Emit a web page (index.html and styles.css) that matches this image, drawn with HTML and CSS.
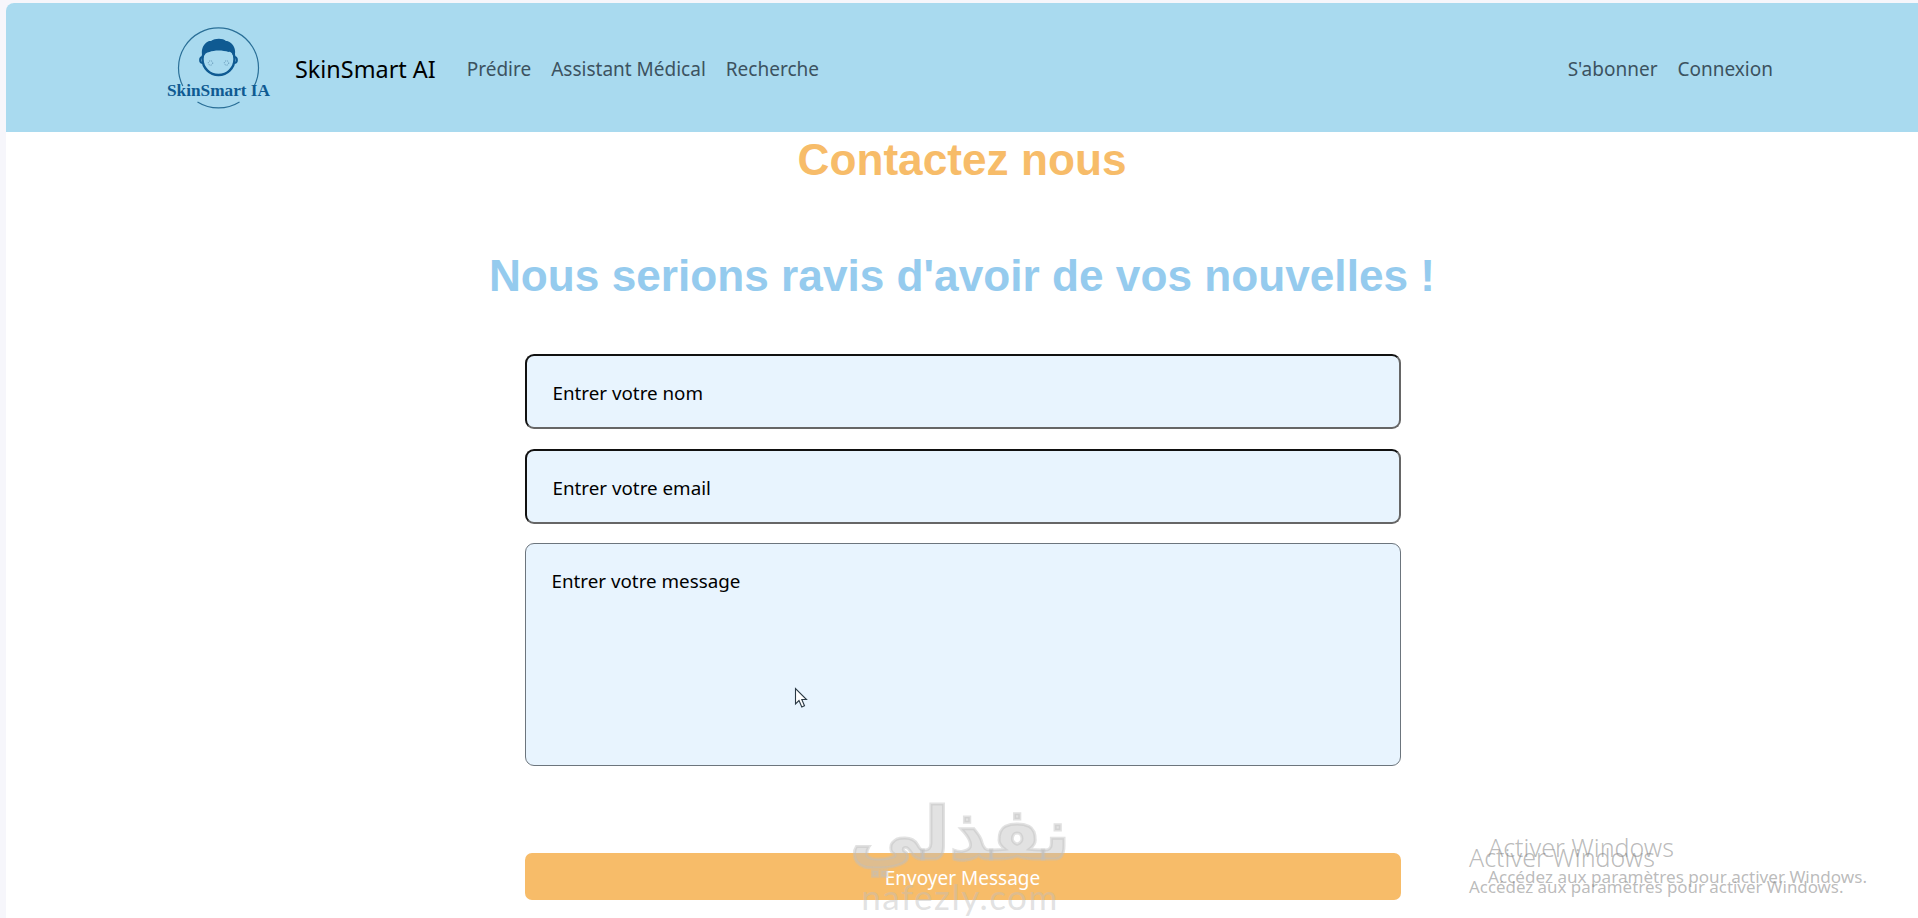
FILE: index.html
```html
<!DOCTYPE html>
<html lang="fr">
<head>
  <meta charset="UTF-8">
  <title>SkinSmart AI - Contact</title>
  <link rel="stylesheet" href="styles.css">
</head>
<body>
  <div class="window">
    <nav class="navbar">
      <a class="logo" href="#">
        <svg width="106" height="84" viewBox="0 0 106 84">
          <path d="M15.800 60A40 40 0 1 1 87.200 60" fill="none" stroke="#2a6f97" stroke-width="1.200"/>
          <path d="M30.500 76A40 40 0 0 0 72.500 76" fill="none" stroke="#2a6f97" stroke-width="1.200"/>
          <circle cx="36" cy="34" r="3" fill="#a9daef" stroke="#0f5a92" stroke-width="1.800"/>
          <circle cx="67" cy="34" r="3" fill="#a9daef" stroke="#0f5a92" stroke-width="1.800"/>
          <circle cx="51.500" cy="33" r="16" fill="#a9daef" stroke="#0f5a92" stroke-width="2.400"/>
          <path d="M36 32C32 21 40 14 44 15C48 12 56 12 59 15C64 15 71 22 67 32C65.500 27 63.500 25 61.500 26C56 24 47 24 42.500 26C39.500 26 37.500 28 36 32Z" fill="#0f5a92"/>
          <circle cx="43.500" cy="37" r="2.200" fill="none" stroke="#5f93b3" stroke-width="1" stroke-dasharray="1 1"/>
          <circle cx="59.500" cy="37" r="2.200" fill="none" stroke="#5f93b3" stroke-width="1" stroke-dasharray="1 1"/>
          <text class="logo-text" x="0" y="70" textLength="103" lengthAdjust="spacingAndGlyphs">SkinSmart IA</text>
        </svg>
      </a>
      <a class="brand" href="#">SkinSmart AI</a>
      <ul class="nav-links">
        <li><a href="#">Prédire</a></li>
        <li><a href="#">Assistant Médical</a></li>
        <li><a href="#">Recherche</a></li>
      </ul>
      <ul class="nav-links nav-right">
        <li><a href="#">S'abonner</a></li>
        <li><a href="#">Connexion</a></li>
      </ul>
    </nav>

    <main class="content">
      <h1 class="title">Contactez nous</h1>
      <h2 class="subtitle">Nous serions ravis d'avoir de vos nouvelles !</h2>

      <form class="contact-form">
        <input class="field field-dark" type="text" placeholder="Entrer votre nom">
        <input class="field field-dark" type="email" placeholder="Entrer votre email">
        <textarea class="field field-message" placeholder="Entrer votre message"></textarea>
        <button class="send" type="button">Envoyer Message</button>
      </form>
    </main>
  </div>

  <!-- screen capture leftovers: cursor, watermark, windows notice -->
  <svg class="cursor" width="14" height="22" viewBox="0 0 14 22">
    <path d="M1.500 1.500V17L5 13.500L7.800 20L10.500 18.800L7.800 12.500H12.500Z" fill="#fff" stroke="#2b3a45" stroke-width="1.100"/>
  </svg>
  <div class="watermark">
    <div class="wm-arabic" lang="ar" dir="rtl">نفذلي</div>
    <div class="wm-latin">nafezly.com</div>
  </div>
  <div class="activate activate-back">
    <div class="activate-title">Activer Windows</div>
    <div class="activate-text">Accédez aux paramètres pour activer Windows.</div>
  </div>
  <div class="activate activate-front">
    <div class="activate-title">Activer Windows</div>
    <div class="activate-text activate-text-small">Accédez aux paramètres pour activer Windows.</div>
  </div>
</body>
</html>
```

FILE: styles.css
```css
html, body {
  margin: 0;
  height: 918px;
  overflow: hidden;
}
body {
  font-family: "Noto Sans", "Open Sans", sans-serif;
  background: #f6f6fb;
  position: relative;
}
.window {
  margin: 3px 0 0 6px;
  height: 915px;
  background: #fff;
  border-top-left-radius: 8px;
  overflow: hidden;
}
.navbar {
  display: flex;
  align-items: center;
  height: 129px;
  padding: 0 145px 0 161px;
  background: #a9daef;
}
.logo {
  display: block;
  width: 106px;
  height: 84px;
  margin-right: 22px;
}
.logo-text {
  font-family: "Liberation Serif", serif;
  font-weight: bold;
  font-size: 16px;
  fill: #0f5a92;
}
.brand {
  color: #000;
  font-size: 23.400px;
  text-decoration: none;
  margin-right: 31px;
  padding-top: 3px;
}
.nav-links {
  display: flex;
  gap: 20px;
  list-style: none;
  margin: 0;
  padding: 3px 0 0;
}
.nav-links a {
  color: #3c5260;
  font-size: 19px;
  text-decoration: none;
}
.nav-right {
  margin-left: auto;
}
.content {
  display: flex;
  flex-direction: column;
  align-items: center;
}
.title, .subtitle {
  font-family: "Liberation Sans", Arial, sans-serif;
  font-weight: bold;
  font-size: 44.200px;
  line-height: 48px;
  margin: 0;
}
.title {
  color: #f7bc69;
  margin-top: 4px;
}
.subtitle {
  color: #95cbee;
  margin-top: 68px;
}
.contact-form {
  display: flex;
  flex-direction: column;
  width: 876px;
  margin: 54px 0 0 1px;
}
.field {
  box-sizing: border-box;
  width: 100%;
  font-family: inherit;
  font-size: 18.800px;
  color: #000;
  background: #e8f4fe;
  outline: none;
}
.field::placeholder {
  color: #000;
  opacity: 1;
}
.field-dark {
  height: 75px;
  margin-bottom: 20px;
  padding: 2px 26px 0;
  border: 2px solid #111;
  border-right-color: #666;
  border-bottom-color: #666;
  border-radius: 9px;
}
.field-message {
  display: block;
  height: 223px;
  margin-top: -1px;
  padding: 24px 26px;
  border: 1px solid #6c757d;
  border-radius: 9px;
  resize: none;
}
.send {
  height: 47px;
  margin-top: 87px;
  padding-top: 3px;
  border: 0;
  border-radius: 7px;
  background: #f7bc69;
  color: #fff;
  font-family: inherit;
  font-size: 19px;
}
.cursor {
  position: absolute;
  left: 794px;
  top: 687px;
}
.watermark {
  position: absolute;
  left: 850px;
  top: 796px;
  width: 220px;
  color: rgba(190, 190, 190, 0.45);
  text-align: center;
}
.wm-arabic {
  font-family: "DejaVu Sans", sans-serif;
  font-weight: bold;
  font-size: 72px;
  line-height: 76px;
  -webkit-text-stroke: 3px rgba(190, 190, 190, 0.45);
}
.wm-latin {
  font-family: "Lato", sans-serif;
  font-size: 35px;
  line-height: 36px;
  letter-spacing: 1.500px;
  margin-top: 6px;
}
.activate {
  position: absolute;
  color: rgba(130, 130, 130, 0.55);
  white-space: nowrap;
}
.activate-back {
  left: 1488px;
  top: 832px;
}
.activate-front {
  left: 1469px;
  top: 842px;
}
.activate-title {
  font-size: 25px;
  line-height: 30px;
  font-weight: 300;
}
.activate-text {
  font-size: 17.100px;
  line-height: 22px;
  margin-top: 4px;
}
.activate-text-small {
  font-size: 16.900px;
}
```
